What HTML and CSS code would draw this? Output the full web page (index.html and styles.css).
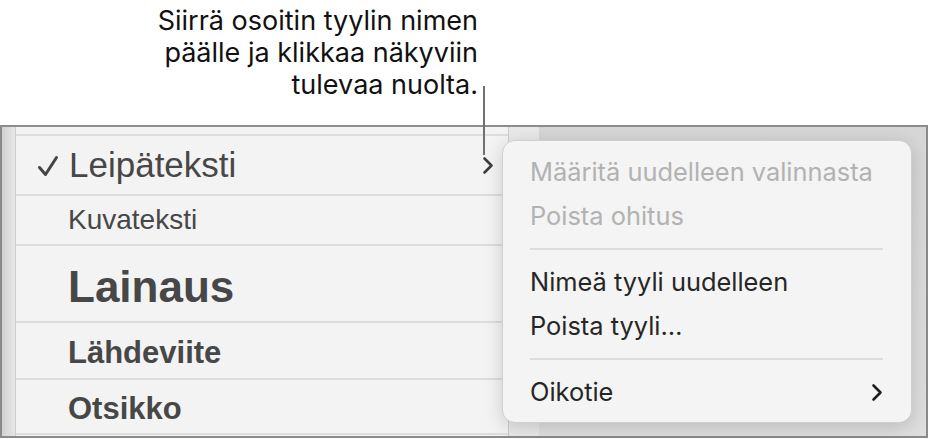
FILE: index.html
```html
<!DOCTYPE html>
<html lang="fi">
<head>
  <meta charset="UTF-8">
  <meta name="viewport" content="width=device-width, initial-scale=1.0">
  <title>Tyylit</title>
  <link rel="stylesheet" href="styles.css">
</head>
<body>
  <div class="caption">
    <p>Siirrä osoitin tyylin nimen<br>päälle ja klikkaa näkyviin<br>tulevaa nuolta.</p>
  </div>
  <div class="callout-line"></div>

  <div class="frame">
    <div class="sidebar-edge"></div>
    <div class="styles-list">
      <div class="row row-top"></div>
      <div class="row row-body">
        <svg class="check" width="22" height="22" viewBox="0 0 22 22">
          <path d="M2.5 12.5 L8.5 19.5 L19.5 2.5" fill="none" stroke="#454545" stroke-width="3" stroke-linecap="round" stroke-linejoin="round"/>
        </svg>
        <span>Leipäteksti</span>
        <svg class="row-arrow" width="12" height="19" viewBox="0 0 12 19">
          <path d="M2.5 2.5 L9.5 9.5 L2.5 16.5" fill="none" stroke="#3e3e3e" stroke-width="2.6" stroke-linecap="round" stroke-linejoin="round"/>
        </svg>
      </div>
      <div class="row row-caption"><span>Kuvateksti</span></div>
      <div class="row row-quote"><span>Lainaus</span></div>
      <div class="row row-source"><span>Lähdeviite</span></div>
      <div class="row row-title"><span>Otsikko</span></div>
      <div class="row row-end"></div>
    </div>
    <div class="list-gutter"></div>
    <div class="canvas-area"></div>
  </div>

  <div class="menu">
    <div class="menu-item disabled">Määritä uudelleen valinnasta</div>
    <div class="menu-item disabled">Poista ohitus</div>
    <div class="menu-sep"></div>
    <div class="menu-item">Nimeä tyyli uudelleen</div>
    <div class="menu-item">Poista tyyli…</div>
    <div class="menu-sep"></div>
    <div class="menu-item has-sub">
      <span>Oikotie</span>
      <svg width="12" height="19" viewBox="0 0 12 19">
        <path d="M2.5 2.5 L9.5 9.5 L2.5 16.5" fill="none" stroke="#1e1e1e" stroke-width="2.6" stroke-linecap="round" stroke-linejoin="round"/>
      </svg>
    </div>
  </div>
</body>
</html>
```

FILE: styles.css
```css
body {
  margin: 0;
  padding: 0;
  width: 928px;
  height: 439px;
  position: relative;
  overflow: hidden;
  background-color: #fff;
  font-family: Inter, "Noto Sans", sans-serif;
}
.caption {
  width: 478px;
  height: 125px;
  text-align: right;
}
.caption p {
  margin: 0;
  padding-top: 5px;
  font-size: 27px;
  line-height: 32px;
  color: #111;
}
.callout-line {
  position: absolute;
  left: 483px;
  top: 86px;
  width: 2px;
  height: 69px;
  background-color: #707070;
  z-index: 2;
}
.frame {
  display: flex;
  height: 313px;
  box-sizing: border-box;
  border: 2px solid #8a8a8a;
  border-top-color: #8c8c8c;
}
.sidebar-edge {
  width: 13px;
  background: linear-gradient(to right, #d2d2d2, #e6e6e6);
  border-right: 1px solid #cfcfcf;
}
.styles-list {
  width: 492px;
  background-color: #f3f3f3;
  font-family: "Liberation Sans", Arial, sans-serif;
  color: #474747;
}
.row {
  display: flex;
  align-items: flex-start;
  box-sizing: border-box;
  border-top: 2px solid #dddddd;
  padding-left: 52px;
}
.row-top {
  height: 7px;
  border-top: none;
}
.row-body {
  height: 60px;
  padding-left: 21px;
  font-size: 35px;
  line-height: 58px;
  align-items: center;
}
.check {
  margin-right: 10px;
  margin-top: 1px;
}
.row-arrow {
  margin-left: auto;
  margin-right: 14px;
}
.row-caption {
  height: 50px;
  font-size: 28px;
  line-height: 48px;
}
.row-quote {
  height: 77px;
  padding-top: 6px;
  font-size: 44px;
  line-height: 69px;
  font-weight: bold;
}
.row-source {
  height: 57px;
  padding-top: 4px;
  font-size: 31px;
  line-height: 51px;
  font-weight: bold;
}
.row-title {
  height: 55px;
  padding-top: 4px;
  font-size: 31px;
  line-height: 49px;
  font-weight: bold;
}
.row-end {
  height: 3px;
}
.list-gutter {
  width: 30px;
  background-color: #e8e8e8;
  border-left: 1px solid #cccccc;
}
.canvas-area {
  flex: 1;
  background: linear-gradient(to bottom, #d6d6d6, #dedede);
}
.menu {
  position: absolute;
  left: 502px;
  top: 140px;
  width: 410px;
  height: 283px;
  box-sizing: border-box;
  padding: 9px 0;
  background-color: #f4f4f4;
  border: 1px solid #d0d0d0;
  border-radius: 13px;
  box-shadow: 0 4px 18px rgba(0, 0, 0, 0.16);
}
.menu-item {
  height: 44px;
  line-height: 44px;
  padding: 0 27px;
  font-size: 25.4px;
  color: #262626;
  white-space: nowrap;
}
.menu-item.disabled {
  color: #b2b2b2;
}
.menu-item.has-sub {
  display: flex;
  align-items: center;
  padding-right: 28px;
}
.menu-item.has-sub svg {
  margin-left: auto;
}
.menu-sep {
  height: 2px;
  margin: 10px 28px 10px 27px;
  background-color: #dcdcdc;
}
```
